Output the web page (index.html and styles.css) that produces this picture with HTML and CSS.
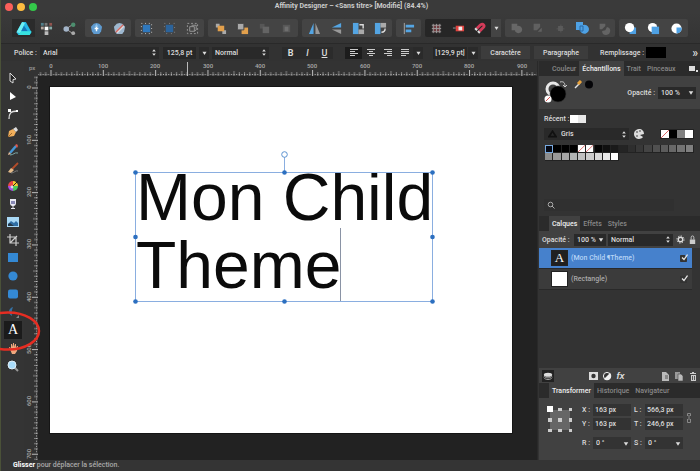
FILE: index.html
```html
<!DOCTYPE html>
<html lang="fr">
<head>
<meta charset="utf-8">
<title>Affinity Designer</title>
<link rel="stylesheet" href="styles.css">
</head>
<body>
<svg class="defs" aria-hidden="true">
  <defs>
    <symbol id="updown" viewBox="0 0 6 10"><path d="M1 4 3 1.500 5 4zM1 6 3 8.500 5 6z"/></symbol>
    <symbol id="down" viewBox="0 0 6 10"><path d="M.5 3.500h5L3 7.500z"/></symbol>
    <symbol id="geo" viewBox="0 0 16 16"><path d="M2 2h7v3a4.500 4.500 0 1 1-3 5H2z"/></symbol>
    <symbol id="none" viewBox="0 0 8 8" preserveAspectRatio="none"><path fill="#fff" d="M0 0h8v8H0z"/><path stroke="#d66" d="m0 8 8-8"/></symbol>
    <symbol id="check" viewBox="0 0 8 8"><path fill="#333" stroke="#333" d="M6.500 3.500V7.500H.5v-6H5"/><path fill="none" stroke="currentColor" stroke-width="1.300" d="m2 3.500 2 2L7.500.5"/></symbol>
  </defs>
</svg>
<div class="window">
  <header class="titlebar">
    <div class="lights"><button class="light close" aria-label="Fermer"></button><button class="light mini" aria-label="Réduire"></button><button class="light zoom" aria-label="Agrandir"></button></div>
    <h1>Affinity Designer – &lt;Sans titre&gt; [Modifié] (84.4%)</h1>
  </header>

  <nav class="toolbar" aria-label="Barre d’outils">
    <div class="group plain">
      <button class="on" aria-label="Dessin"><svg viewBox="0 0 16 16"><path fill="#24b8e6" d="M6 1h4l6 11-2 3H2l-2-3z"/><path fill="#6ff0f2" d="m6 1 3 1-5 11-4-1z"/><path fill="#1577b8" d="m8 5 4 6H5z"/><path fill="#37e2e0" d="m2 15 3-4h11l-2 4z"/></svg></button>
      <button aria-label="Pixel"><svg viewBox="0 0 14 14"><path fill="#52808c" d="M1 1h3v3H1z"/><path fill="#777" d="M5 1h3v3H5z"/><path fill="#91544f" d="M10 1h3v3h-3z"/><path fill="#b5a7a0" d="M1 5h3v3H1z"/><path fill="#fff" d="M5 5h4v4H5z"/><path fill="#86aaa7" d="M10 5h3v3h-3z"/><path fill="#bbb" d="M5 10h4v4H5z"/></svg></button>
      <button aria-label="Export"><svg viewBox="0 0 14 14"><path stroke="#aaa" d="m4 7 6-4M4 8l6 4"/><circle cx="3.500" cy="7.500" r="3" fill="#a3b4c8"/><circle cx="11" cy="3" r="2.400" fill="#4c8e6e"/><circle cx="11" cy="12" r="2" fill="#aaa"/></svg></button>
    </div>
    <div class="group">
      <button aria-label="Par défaut"><svg viewBox="0 0 14 14"><path fill="#5f9bd0" d="m7 1 3 1 3 3-1 5-2 3H4l-2-3-1-5 3-3z"/><path fill="#8fc2ea" d="m7 2 2 3H5z"/><path stroke="#fff" stroke-width="1.500" d="M7 5v5M5 7h4"/></svg></button>
      <button aria-label="Rétablir"><svg viewBox="0 0 14 14"><path fill="#9db7cf" d="m7 1 3 1 3 3-1 5-2 3H4l-2-3-1-5 3-3z"/><path stroke="#ddd" stroke-width="3" d="m4 11 7-7"/><path stroke="#cf6660" stroke-width="1.500" d="m3 11 8-8"/></svg></button>
    </div>
    <div class="group">
      <button aria-label="Sélection"><svg viewBox="0 0 14 14"><path fill="#2f78bd" d="M3 3h8v8H3z"/><path fill="none" stroke="#ccc" stroke-dasharray="1 3" d="M1.500 1.500h11v11h-11z"/></svg></button>
      <button aria-label="Zone"><svg viewBox="0 0 14 14"><path fill="#2c639a" d="M3 3h8v8H3z"/><path fill="none" stroke="#888" stroke-dasharray="1 4" d="M1.500 1.500h11v11h-11z"/></svg></button>
      <button aria-label="Transformation"><svg viewBox="0 0 14 14" fill="none" stroke="#999"><path stroke-dasharray="2 2" d="M1.500 1.500h11v11h-11z"/><path d="M4 5h5v5H4zM6 3.500h5v5L9 10"/></svg></button>
    </div>
    <div class="group four">
      <button aria-label="Premier plan"><svg viewBox="0 0 14 14"><path fill="#aaa" d="M2 2h4v4H2zM9 9h4v4H9z"/><path fill="#e2a04c" d="M4 4h7v6H4z"/></svg></button>
      <button aria-label="Avancer"><svg viewBox="0 0 14 14"><path fill="#e2a04c" d="M6 6h7v7H6z"/><path fill="#aaa" stroke="#444" d="M1.500 1.500h7v7h-7z"/></svg></button>
      <button aria-label="Reculer"><svg viewBox="0 0 14 14"><path fill="#565656" d="M2 2h5v5H2z"/><path fill="#646464" d="M5 5h7v7H5z"/></svg></button>
      <button aria-label="Arrière-plan"><svg viewBox="0 0 14 14"><path fill="#575757" d="M3 3h8v8H3z"/><path fill="#6e6e6e" d="M5 5h4v5H5z"/></svg></button>
    </div>
    <div class="group four">
      <button aria-label="Miroir horizontal"><svg viewBox="0 0 14 14"><path fill="#54a5e3" d="M6 1v12H1z"/><path fill="#999" d="M8 1v12h5z"/></svg></button>
      <button aria-label="Miroir vertical"><svg viewBox="0 0 14 14"><path fill="#54a5e3" d="M12 1v5H2z"/><path fill="#999" d="M12 13V8H2z"/></svg></button>
      <button aria-label="Rotation gauche"><svg viewBox="0 0 14 14"><path fill="#54a5e3" d="M1 1h6v12H1z"/><path fill="#aaa" d="M7 8h6v5H7z"/><path fill="none" stroke="#ddd" stroke-width="1.500" d="M8 3h4v4"/></svg></button>
      <button aria-label="Rotation droite"><svg viewBox="0 0 14 14"><path fill="#54a5e3" d="M1 1h6v12H1z"/><path fill="#aaa" d="M7 1h6v5H7z"/><path fill="none" stroke="#ddd" stroke-width="1.500" d="M12 7c0 3-1 4-4 4"/></svg></button>
    </div>
    <div class="group wide">
      <button aria-label="Alignement"><svg viewBox="0 0 14 14"><path stroke="#aaa" d="M2.500 1v12"/><path fill="#54a5e3" d="M4 3h9v3H4zM4 8h6v3H4z"/></svg></button>
    </div>
    <div class="group dark">
      <button aria-label="Grille"><svg viewBox="0 0 14 14"><path fill="#703b3f" d="M3 3h8v8H3z"/><path stroke="#999" d="M3.500 2v10M7 2v10M10.500 2v10M2 3.500h10M2 7h10M2 10.500h10"/></svg></button>
      <button aria-label="Guides"><svg viewBox="0 0 14 14"><path fill="#e2423e" d="M4 4h9v6H4z"/><path fill="#eee" d="M7 5h4v4H7z"/><path stroke="#999" d="M1 6.500h3"/></svg></button>
      <button aria-label="Magnétisme"><svg viewBox="0 0 14 14"><path fill="none" stroke="#d43b59" stroke-width="3" d="m3 7 4-4c3-2 5 1 3 3l-4 4"/><path stroke="#ddd" stroke-width="3" d="m3 7-1.500 1.500M6 10l-1.500 1.500"/></svg></button>
      <button class="drop" aria-label="Options"><svg><use href="#down"/></svg></button>
    </div>
    <div class="group four flat">
      <button aria-label="Ajouter"><svg viewBox="0 0 16 16" fill="#676767"><use href="#geo"/></svg></button>
      <button aria-label="Soustraire"><svg viewBox="0 0 16 16" fill="#606060"><path d="M2 2h8v4L6 10H2zM12 7v5H7z"/></svg></button>
      <button aria-label="Intersection"><svg viewBox="0 0 16 16" fill="#5a5a5a"><path d="M5 5h6v6H5zM3 8h10v1H3zM8 3h1v10H8z"/></svg></button>
      <button class="lit" aria-label="Diviser"><svg viewBox="0 0 16 16" fill="#4ea1e4"><use href="#geo"/><path fill="none" stroke="#2a68a4" d="M6 6h3v5H6z"/></svg></button>
      <button aria-label="Combiner"><svg viewBox="0 0 16 16" fill="#646464"><path d="M2 2h7v3L5 9H2zM11 6a5 5 0 1 1-6 5l4-1z"/></svg></button>
    </div>
    <div class="group">
      <button aria-label="Insérer derrière"><svg viewBox="0 0 14 14"><path fill="#4ea1e4" d="M7 6h6v7H6z"/><circle cx="6" cy="6" r="5" fill="#fff"/></svg></button>
      <button aria-label="Insérer devant"><svg viewBox="0 0 14 14"><circle cx="6" cy="6" r="5" fill="#fff"/><path fill="#4ea1e4" d="M5 5h8v8H5z"/></svg></button>
      <button aria-label="Insérer dedans"><svg viewBox="0 0 14 14"><circle cx="7" cy="7" r="5.500" fill="#fff"/><path fill="#4ea1e4" d="M7 6h5.500A5.500 5.500 0 0 1 7 12.500z"/></svg></button>
    </div>
  </nav>

  <div class="context">
    <label for="font">Police :</label>
    <span class="pick font"><select id="font"><option>Arial</option></select><svg><use href="#updown"/></svg></span>
    <input class="size" aria-label="Taille" value="125,8 pt">
    <button class="drop" aria-label="Tailles"><svg><use href="#down"/></svg></button>
    <span class="pick style"><select aria-label="Style"><option>Normal</option></select><svg><use href="#updown"/></svg></span>
    <div class="biu"><button><b>B</b></button><button><i>I</i></button><button><u>U</u></button></div>
    <div class="aligns">
      <button class="on" aria-label="Gauche"><svg viewBox="0 0 8 8"><path d="M0 .5h8M0 2.500h5M0 4.500h8M0 6.500h5"/></svg></button>
      <button aria-label="Centre"><svg viewBox="0 0 8 8"><path d="M0 .5h8M2 2.500h4M0 4.500h8M2 6.500h4"/></svg></button>
      <button aria-label="Droite"><svg viewBox="0 0 8 8"><path d="M0 .5h8M3 2.500h5M0 4.500h8M3 6.500h5"/></svg></button>
      <button aria-label="Justifier"><svg viewBox="0 0 8 8"><path d="M0 .5h8M0 2.500h8M0 4.500h8M0 6.500h5"/></svg></button>
      <button class="drop" aria-label="Plus d’alignements"><svg><use href="#down"/></svg></button>
    </div>
    <input class="leading" aria-label="Interligne" value="[129,9 pt]">
    <button class="drop" aria-label="Interlignes"><svg><use href="#down"/></svg></button>
    <button class="text-btn">Caractère</button>
    <button class="text-btn para">Paragraphe</button>
    <span class="fill-label">Remplissage :</span>
    <button class="fill" aria-label="Couleur de remplissage"></button>
    <button class="more" aria-label="Plus">»</button>
  </div>

  <main class="work">
    <nav class="tools" aria-label="Outils">
      <button aria-label="Déplacement"><svg viewBox="0 0 12 12"><path fill="#222" stroke="#ddd" d="m3 1 6 6-3 .5V11L3 9z"/></svg></button>
      <button aria-label="Nœud"><svg viewBox="0 0 12 12"><path fill="#fff" d="m3 2 6 5-6 3z"/></svg></button>
      <button aria-label="Coin"><svg viewBox="0 0 12 12"><path fill="none" stroke="#ddd" stroke-width="1.300" d="M2 11c0-5 1-8 9-8"/><path fill="#fff" d="M1 1h3v3H1zM9 2h2v2H9z"/></svg></button>
      <button aria-label="Plume"><svg viewBox="0 0 12 12"><path fill="#f0ae5b" d="m1 11 1-6 4-2 3 3-2 4z"/><path fill="#ddd" d="m6 3 3-2 2 3-2 2z"/><path stroke="#7d4b1a" stroke-width=".7" d="m1 11 4-4"/></svg></button>
      <button aria-label="Crayon"><svg viewBox="0 0 12 12"><path stroke="#4698d7" stroke-width="2.500" d="m3 9 6-7"/><path fill="#e7bd99" d="m1 11 1-3 2 2z"/><path fill="#e05a4e" d="m8 1 2-1 1 2-1 2z"/><path stroke="#7ba7a7" fill="none" d="M3 11c4 0 4-3 8-2"/></svg></button>
      <button aria-label="Pinceau"><svg viewBox="0 0 12 12"><path stroke="#b34d2a" stroke-width="1.800" d="m5 7 6-6"/><path fill="#e3bb8b" d="m1 10 3-4 3 2-3 3z"/><path stroke="#777" fill="none" d="M4 11c4 0 4-3 7-2"/></svg></button>
      <button aria-label="Dégradé"><svg viewBox="0 0 12 12"><path fill="#ea4747" d="M6 6V1a5 5 0 0 0-5 5z"/><path fill="#f4ca33" d="M6 6h5a5 5 0 0 0-5-5z"/><path fill="#4bc95c" d="M6 6v5a5 5 0 0 0 5-5z"/><path fill="#a950e8" d="M6 6H1a5 5 0 0 0 5 5z"/><path stroke="#222" d="m5 7 6-6"/><circle cx="5" cy="7" r="1.400" fill="#ddd"/></svg></button>
      <button aria-label="Transparence"><svg viewBox="0 0 12 12"><path fill="#e8e8f2" d="M3 1h6v4c0 2-1 3-2.500 3v2H8v1H4v-1h1.500V8C4 8 3 7 3 5z"/><path fill="#8889b5" d="M4 3h4v3H4z"/></svg></button>
      <button aria-label="Image"><svg viewBox="0 0 12 12"><path fill="#a8d8f5" d="M0 1h12v10H0z"/><path fill="#2f6ea5" d="M1 8 4 5l3 2 2-2 2 2v3H1z"/><path fill="#243848" d="m1 8 2-1 4 3H1z"/></svg></button>
      <button aria-label="Recadrage"><svg viewBox="0 0 12 12"><path fill="none" stroke="#ccc" stroke-width="1.200" d="M3 0v9h9M0 3h9v9M3 9l7-7"/></svg></button>
      <button aria-label="Rectangle"><svg viewBox="0 0 12 12"><path fill="#3489d4" d="M1 1h10v9H1z"/></svg></button>
      <button aria-label="Ellipse"><svg viewBox="0 0 12 12"><circle cx="6" cy="6" r="4.600" fill="#3489d4"/></svg></button>
      <button aria-label="Rectangle arrondi"><svg viewBox="0 0 12 12"><rect x="1" y="1.500" width="10" height="9" rx="2" fill="#3489d4"/></svg></button>
      <button aria-label="Croissant"><svg viewBox="0 0 12 12"><path fill="#3471a5" d="M6 1C2 2 0 7 5 10c-1-4 0-6 1-9z"/><path fill="#888" d="M12 9v3H9z"/></svg></button>
      <button class="on" aria-label="Texte artistique"><span>A</span></button>
      <button aria-label="Main"><svg viewBox="0 0 12 12"><path fill="#efa87e" d="M2 5h1l1 2V2h1l1 3V1h1v4l1-3h1v4l1-2h1L10 9l-2 3H5z"/></svg></button>
      <button aria-label="Zoom"><svg viewBox="0 0 12 12"><path stroke="#999" stroke-width="2" d="m8 8 3 3"/><circle cx="5" cy="5" r="4" fill="#a9dcfa" stroke="#e0eef6"/></svg></button>
      <svg class="ring" viewBox="0 0 41 40" aria-hidden="true"><ellipse cx="8" cy="20" rx="31" ry="18.500"/></svg>
    </nav>

    <section class="document">
      <span class="unit">px</span>
      <svg class="ruler across" aria-hidden="true">
        <defs><pattern id="th" width="52.320" height="15" x="12.500" patternUnits="userSpaceOnUse"><path d="M.5 9v6"/><path stroke-dasharray="1 1.616" d="M0 13.500h52.320"/><path d="M5.700 11v4M10.900 11v4M16.200 11v4M21.400 11v4M26.600 10v5M31.900 11v4M37.100 11v4M42.300 11v4M47.500 11v4" opacity=".6"/></pattern></defs>
        <rect class="ticks" width="100%" height="15" fill="url(#th)"/>
        <path class="cursor" d="M149.500 1v14"/>
        <g><text x="13" y="7">0</text><text x="65" y="7">100</text><text x="117" y="7">200</text><text x="170" y="7">300</text><text x="222" y="7">400</text><text x="274" y="7">500</text><text x="327" y="7">600</text><text x="379" y="7">700</text><text x="431" y="7">800</text><text x="484" y="7">900</text></g>
      </svg>
      <svg class="ruler down" aria-hidden="true">
        <defs><pattern id="tv" width="14" height="52.320" y="11.500" patternUnits="userSpaceOnUse"><path d="M8 .5h6"/><path stroke-dasharray="1 1.616" d="M12.500 0v52.320"/><path d="M10 5.700h4M10 10.900h4M10 16.200h4M10 21.400h4M9 26.600h5M10 31.900h4M10 37.100h4M10 42.300h4M10 47.500h4" opacity=".6"/></pattern></defs>
        <rect class="ticks" width="14" height="100%" fill="url(#tv)"/>
        <g><text transform="translate(7 11)rotate(-90)">0</text><text transform="translate(7 64)rotate(-90)">100</text><text transform="translate(7 116)rotate(-90)">200</text><text transform="translate(7 168)rotate(-90)">300</text><text transform="translate(7 221)rotate(-90)">400</text><text transform="translate(7 273)rotate(-90)">500</text><text transform="translate(7 325)rotate(-90)">600</text><text transform="translate(7 378)rotate(-90)">700</text></g>
      </svg>
      <div class="canvas">
        <div class="artboard">
          <div class="art-text">
            <p>Mon Child<br>Theme</p>
            <svg class="frame" viewBox="0 0 309 156" aria-hidden="true">
              <path fill="none" stroke="#8aaee0" d="M5.500 24.500h297v129h-297zM154.500 9v15"/>
              <path stroke="#8a93a5" d="M210.500 80v73"/>
              <circle cx="154.500" cy="6.500" r="2.800" fill="#fff" stroke="#5b92d0"/>
              <g fill="#2c6fc0"><circle cx="5.500" cy="24.500" r="2.300"/><circle cx="154.500" cy="24.500" r="2.300"/><circle cx="302.500" cy="24.500" r="2.300"/><circle cx="5.500" cy="89" r="2.300"/><circle cx="302.500" cy="89" r="2.300"/><circle cx="5.500" cy="153.500" r="2.300"/><circle cx="154.500" cy="153.500" r="2.300"/><circle cx="302.500" cy="153.500" r="2.300"/></g>
            </svg>
          </div>
        </div>
      </div>
    </section>

    <aside class="panels">
      <div class="tabs"><button>Couleur</button><button class="active">Échantillons</button><button>Trait</button><button>Pinceaux</button><button class="menu" aria-label="Menu"><svg viewBox="0 0 10 8"><path fill="#ddd" d="M0 1h6v5H0zM7 5h2v2H7z"/></svg></button></div>
      <section class="colour">
        <svg class="wells" viewBox="0 0 54 26" aria-hidden="true"><circle cx="9" cy="9" r="6" fill="none" stroke="#e8e8e8" stroke-width="3"/><circle cx="14" cy="14" r="8" fill="#000" stroke="#333" stroke-width=".6"/><circle cx="4" cy="19" r="3.500" fill="#fff"/><path stroke="#d55" d="m2 21 4-4"/><path fill="none" stroke="#ccc" d="M16 2c4-1 5 1 5 5m-2-2 2 2 2-2"/><path stroke="#e5e5e5" stroke-width="1.500" d="m31 8 5-5"/><path stroke="#e9a33c" stroke-width="3" d="m34 4 3-3"/><circle cx="45" cy="4.500" r="4" fill="#050508"/></svg>
        <label for="opa">Opacité :</label>
        <span class="pick opa"><select id="opa"><option>100 %</option></select><svg><use href="#down"/></svg></span>
      </section>
      <section class="swatches">
        <div class="recent"><span>Récent :</span><i class="white"></i><i class="light-grey"></i></div>
        <div class="palette">
          <span class="pick pal"><svg class="tri" viewBox="0 0 10 8"><path fill="none" stroke="#111" stroke-width="2" d="m5 1 4 6H1z"/></svg><select aria-label="Palette"><option>Gris</option></select><svg><use href="#updown"/></svg></span>
          <svg class="disc" viewBox="0 0 12 12"><path fill="#ddd" d="M6 1a5 5 0 1 0 4 8L7 7l4-1c0-3-2-5-5-5z"/><g fill="#333"><circle cx="4" cy="4" r=".8"/><circle cx="7" cy="3" r=".8"/><circle cx="4" cy="8" r=".8"/></g></svg>
          <div class="quick"><svg><use href="#none"/></svg><i class="black"></i><i class="grey"></i><i class="white"></i></div>
        </div>
        <div class="cells">
          <i class="chosen"></i><i style="background:#000"></i><i style="background:#000"></i><i style="background:#000"></i><svg><use href="#none"/></svg><svg><use href="#none"/></svg><i style="background:#060606"></i><i style="background:#101010"></i><i style="background:#1a1a1a"></i><i style="background:#242424"></i><i style="background:#2e2e2e"></i><i style="background:#383838"></i><i style="background:#444"></i><i style="background:#505050"></i><i style="background:#5c5c5c"></i><i style="background:#686868"></i><i style="background:#747474"></i><i style="background:#808080"></i>
          <i style="background:#8d8d8d"></i><i style="background:#999"></i><i style="background:#a6a6a6"></i><i style="background:#b3b3b3"></i><i style="background:#c0c0c0"></i><i style="background:#ccc"></i><i style="background:#d9d9d9"></i><i style="background:#e9e9e9"></i><i style="background:#fff"></i>
        </div>
        <label class="search"><svg viewBox="0 0 8 8"><circle cx="3.500" cy="3.500" r="2.300" fill="none" stroke="#aaa"/><path stroke="#aaa" d="m5 5 2.500 2.500"/></svg><input aria-label="Rechercher"></label>
      </section>

      <div class="tabs"><button class="active">Calques</button><button>Effets</button><button>Styles</button></div>
      <section class="blend">
        <label for="lop">Opacité :</label>
        <span class="pick lop"><select id="lop"><option>100 %</option></select><svg><use href="#down"/></svg></span>
        <span class="pick mode"><select aria-label="Mode de fusion"><option>Normal</option></select><svg><use href="#updown"/></svg></span>
        <button aria-label="Réglages"><svg viewBox="0 0 10 10"><circle cx="5" cy="5" r="2.500" fill="none" stroke="#ddd" stroke-width="1.500"/><circle cx="5" cy="5" r="4" fill="none" stroke="#ddd" stroke-dasharray="1.500 1.600"/></svg></button>
        <button aria-label="Verrouiller"><svg viewBox="0 0 10 10"><path fill="#ccc" d="M2 5h6v5H2z"/><path fill="none" stroke="#ccc" d="M3.500 5V2.500c0-2 3-2 3 0V5"/></svg></button>
      </section>
      <ul class="layers">
        <li class="selected"><span class="thumb letter">A</span><span>(Mon Child ¶Theme)</span><svg><use href="#check"/></svg></li>
        <li><span class="thumb"></span><span>(Rectangle)</span><svg><use href="#check"/></svg></li>
      </ul>
      <div class="layer-bar">
        <button class="on" aria-label="Calque"><svg viewBox="0 0 12 10"><ellipse cx="6" cy="3.500" rx="5" ry="2.500" fill="#ddd"/><path fill="none" stroke="#bbb" d="M1 5c2 3 8 3 10 0M1 7c2 3 8 3 10 0"/></svg></button>
        <button class="push" aria-label="Masque"><svg viewBox="0 0 10 10"><path fill="#ddd" d="M1 1h9v8H1z"/><circle cx="5.500" cy="5" r="2.200" fill="#333"/></svg></button>
        <button aria-label="Réglage"><svg viewBox="0 0 10 10"><circle cx="5" cy="5" r="3.600" fill="#333" stroke="#eee"/><path fill="#eee" d="M8 2a4 4 0 0 1-6 6z"/></svg></button>
        <button class="fx">fx</button>
        <button class="push" aria-label="Nouveau"><svg viewBox="0 0 10 10"><path fill="#bbb" d="M2 1h4l3 3v6H2z"/><path stroke="#555" d="M5 5h3M5 7h3"/></svg></button>
        <button aria-label="Dupliquer"><svg viewBox="0 0 10 10"><path fill="#999" d="M1 1h5v7H1z"/><path fill="#bbb" stroke="#444" stroke-width=".6" d="M4 3h3l2 2v5H4z"/></svg></button>
        <button aria-label="Supprimer"><svg viewBox="0 0 10 10"><path fill="#ccc" d="M2 2h6v1H2zM4 1h2v1H4zM3 4h5v6H3z"/><path stroke="#555" d="M4.500 5v4M6.500 5v4"/></svg></button>
      </div>

      <div class="tabs"><button class="active">Transformer</button><button>Historique</button><button>Navigateur</button></div>
      <section class="transform">
        <svg class="anchor" viewBox="0 0 28 28" aria-hidden="true"><path fill="#666" d="M4 4h20v20H4z"/><path fill="#ccc" d="M12 2h4v3h-4zM23 2h3v3h-3zM2 12h4v4H2zM12 12h4v4h-4zM23 12h3v4h-3zM2 23h4v3H2zM12 23h4v3h-4zM23 23h3v3h-3z"/><path fill="#fff" d="M1 0h6v6H1z"/></svg>
        <div class="fields">
          <label for="tx">X :</label><input id="tx" value="163 px"><label for="tl">L :</label><input id="tl" value="566,3 px">
          <label for="ty">Y :</label><input id="ty" value="163 px"><label for="tt">T :</label><input id="tt" value="246,6 px">
          <label class="low" for="tr">R :</label><span class="pick low"><select id="tr"><option>0 °</option></select><svg><use href="#down"/></svg></span><label class="low" for="ts">S :</label><span class="pick low"><select id="ts"><option>0 °</option></select><svg><use href="#down"/></svg></span>
        </div>
        <svg class="link" viewBox="0 0 4 12" aria-hidden="true"><path fill="none" stroke="#888" d="M.5 4V1.500h3V4M.5 7v3.500h3V7M2 3v5"/></svg>
      </section>
    </aside>
  </main>
  <footer class="status"><b>Glisser</b> pour déplacer la sélection.</footer>
</div>
</body>
</html>
```

FILE: styles.css
```css
* { box-sizing: border-box; }
body { margin: 0; background: #333; color: #ddd; font: 500 7px/10px Roboto, "Liberation Sans", sans-serif; }
button, input, select { margin: 0; padding: 0; border: 0; border-radius: 0; background: none; color: inherit; font: inherit; appearance: none; }
button { display: flex; align-items: center; justify-content: center; }
input { min-width: 0; }
label, span { white-space: nowrap; }
svg { display: block; }
svg:not([fill]) { fill: currentColor; }
.defs { position: absolute; width: 0; height: 0; }

.window { display: flex; flex-direction: column; min-height: 100vh; border-left: 1px solid #4a5138; background: #353535; }

.titlebar { display: flex; align-items: center; height: 13px; padding: 0 4px; background: #3a3a3a; }
.lights { display: flex; gap: 4px; flex: 0 0 60px; }
.light { width: 8px; height: 8px; border-radius: 50%; }
.close { background: #fc5f5a; }
.mini { background: #fdbc40; }
.zoom { background: #34c84a; }
h1 { flex: 1; margin: 0 58px 1px 0; text-align: center; font: 700 7px/10px Roboto, sans-serif; color: #ccc; }

.toolbar { display: flex; align-items: center; gap: 4px; height: 30px; padding: 0 11px; background: linear-gradient(#3a3a3a, #343434); }
.group { display: flex; height: 18px; border-radius: 2px; background: #444; }
.group button { width: 23px; height: 18px; }
.group svg { width: 13px; height: 13px; }
.group.plain { background: none; }
.group.plain .on { background: #2b2b2b; }
.group.plain .on svg { width: 16px; height: 15px; }
.group.four { padding: 0 1px; }
.group.four button, .group.dark button { width: 22px; }
.group.flat { padding: 0; }
.group.flat .lit svg { width: 16px; height: 16px; }
.group.wide button { width: 25px; }
.group.dark { background: #262626; }
.group.dark .drop, .drop { width: 10px; background: #444; }
.group .drop svg, .drop svg { width: 5px; height: 8px; }

.context { display: flex; align-items: center; height: 18px; padding: 0 2px 0 13px; border-top: 1px solid #292929; background: #323232; }
.context label { width: 26px; }
.pick { display: grid; align-items: center; height: 12px; background: #292929; }
.pick > * { grid-row: 1; grid-column: 1; }
.pick select { width: 100%; height: 12px; padding-left: 3px; }
.pick > svg { justify-self: end; width: 6px; height: 9px; margin-right: 2px; pointer-events: none; }
.font { width: 119px; margin-right: 4px; }
.context input { height: 12px; background: #272727; text-align: center; }
.size { width: 33px; margin-right: 3px; }
.context .drop { height: 12px; background: #2a2a2a; }
.style { width: 57px; margin: 0 13px 0 3px; }
.biu, .aligns { display: flex; }
.biu button { width: 17px; height: 12px; background: #2b2b2b; font-size: 9px; }
.aligns { margin: 0 10px 0 12px; }
.aligns button { width: 17px; height: 12px; background: #2d2d2d; }
.aligns .on { background: #1c1c1c; }
.aligns svg { width: 8px; height: 8px; stroke: #ccc; }
.aligns .drop { width: 10px; }
.aligns .drop svg { width: 5px; stroke: none; }
.context .leading { width: 34px; margin-right: 1px; }
.text-btn { width: 49px; height: 13px; margin-left: 3px; background: #3c3c3c; }
.para { width: 54px; margin-left: 4px; }
.fill-label { width: 46px; margin-left: 12px; }
.fill { width: 20px; height: 11px; background: #000; }
.more { margin-left: auto; font-size: 12px; }

.work { display: flex; flex: 1; }
.tools { position: relative; width: 23px; padding-top: 8px; background: #343434; }
.tools button { width: 18px; height: 18px; margin-left: 3px; }
.tools button svg { width: 12px; height: 12px; }
.tools .on { background: #1b1b1b; }
.tools span { font: 14px/16px "Liberation Serif", serif; color: #fff; }
.ring { position: absolute; z-index: 2; left: -1px; top: 250px; width: 41px; height: 40px; }
.ring ellipse { fill: none; stroke: #e62d22; stroke-width: 2.500; }

.document { display: grid; grid-template: 15px 1fr / 14px 1fr; flex: 1; min-width: 0; background: #333; }
.unit { padding: 2px 0 0 5px; font-size: 6px; color: #999; }
.ruler { width: 100%; color: #aaa; font-size: 6px; }
.ruler path { stroke: #bbb; stroke-width: 1; }
.ruler g { text-anchor: middle; }
.ruler text { fill: #aaa; }
.ruler.down { height: 100%; }
.across { height: 15px; }
.canvas { display: flex; padding: 11px 25px 27px 12px; background: #222; }
.artboard { position: relative; flex: 1; background: #fff; box-shadow: 0 0 0 1px #151515; }
.art-text { position: absolute; left: 86px; top: 85px; width: 297px; height: 129px; }
.art-text p { margin: -9px 0 0; font: 66px/68px "Liberation Sans", sans-serif; white-space: nowrap; color: #0b0b0b; }
.frame { position: absolute; left: -6px; top: -24px; width: 309px; height: 156px; }

.panels { display: flex; flex-direction: column; width: 163px; padding-left: 1px; background: #333; border-left: 1px solid #292929; }
.tabs { display: flex; height: 15px; flex: none; padding-left: 10px; background: #2b2b2b; color: #888; }
.tabs button { padding: 0 3px; }
.tabs .active { background: #414141; color: #eee; }
.tabs .menu { margin-left: auto; padding: 0 1px; }
.menu svg { width: 10px; height: 8px; }
.colour { display: flex; align-items: center; height: 33px; padding: 0 4px 0 5px; background: #414141; }
.wells { width: 54px; height: 26px; }
.colour label { margin-left: auto; margin-right: 3px; }
.opa { width: 38px; }
.swatches { display: flex; flex-direction: column; height: 107px; padding: 5px 6px 5px 5px; }
.recent { display: flex; align-items: center; height: 10px; }
.recent span { width: 26px; }
.recent i { width: 8px; height: 8px; }
i.white { background: #fff; }
i.light-grey { background: #e8e8e8; }
i.black { background: #000; }
i.grey { background: #808080; }
.palette { display: flex; align-items: center; height: 20px; }
.pal { width: 85px; }
.pal select { padding-left: 17px; }
.pal .tri { justify-self: start; width: 9px; height: 8px; margin-left: 4px; }
.disc { width: 12px; height: 12px; margin-left: 4px; }
.quick { display: grid; grid-template-columns: repeat(4, 8px); margin-left: auto; border: 1px solid #222; }
.quick > * { width: 8px; height: 8px; }
.cells { display: grid; grid-template-columns: repeat(18, 1fr); grid-auto-rows: 8px; margin: 1px 0 0 1px; }
.cells > * { width: 100%; height: 8px; border: solid #222; border-width: 0 1px 1px 0; }
.cells .chosen { border: 1px solid #78a9df; background: #060914; }
.search { display: flex; align-items: center; height: 12px; width: 130px; margin-top: auto; padding-left: 3px; background: #303030; }
.search svg { width: 8px; height: 8px; }
.blend { display: flex; align-items: center; height: 17px; padding: 0 2px 0 3px; background: #414141; }
.blend label { width: 32px; }
.lop { width: 32px; margin-right: 2px; }
.mode { width: 65px; margin-right: auto; }
.blend button { width: 12px; height: 12px; }
.blend button svg { width: 9px; height: 9px; }
.layers { flex: 1; margin: 0; padding: 0 8px 0 0; list-style: none; color: #aaa; }
.layers li { display: flex; align-items: center; gap: 3px; height: 21px; padding: 0 4px 0 12px; border-bottom: 1px solid #292929; background: #3b3b3b; }
.layers .selected { background: #4681cc; color: #b7d4f6; }
.thumb { width: 17px; height: 16px; border: 1px solid #222; background: #fff; }
.letter { background: #202020; color: #fff; font: 13px/14px "Liberation Serif", serif; text-align: center; }
.layers svg { width: 8px; height: 8px; margin-left: auto; color: #e8e8e8; }
.layer-bar { display: flex; align-items: center; height: 15px; padding: 0 1px 0 3px; gap: 2px; background: #414141; }
.layer-bar button { width: 12px; height: 12px; }
.layer-bar .on { background: #222; }
.layer-bar svg { width: 10px; height: 10px; }
.layer-bar .push { margin-left: auto; }
.layer-bar .fx { font: italic 700 9px/10px "Liberation Sans", sans-serif; }
.transform { display: flex; align-items: flex-start; gap: 8px; height: 62px; padding: 6px 7px 0; background: #414141; }
.anchor { flex: none; width: 28px; height: 28px; margin-top: 2px; }
.fields { display: grid; grid-template-columns: 8px 38px 8px 38px; gap: 2px 3px; align-items: center; }
.fields input { width: 100%; height: 12px; padding-left: 2px; background: #333; }
.fields .pick { background: #333; }
.fields .low { margin-top: 5px; }
.link { flex: none; width: 4px; height: 12px; margin: 8px 0 0 -4px; }
.status { height: 11px; padding-left: 12px; background: #343434; color: #aaa; }
.status b { color: #fff; }
```
